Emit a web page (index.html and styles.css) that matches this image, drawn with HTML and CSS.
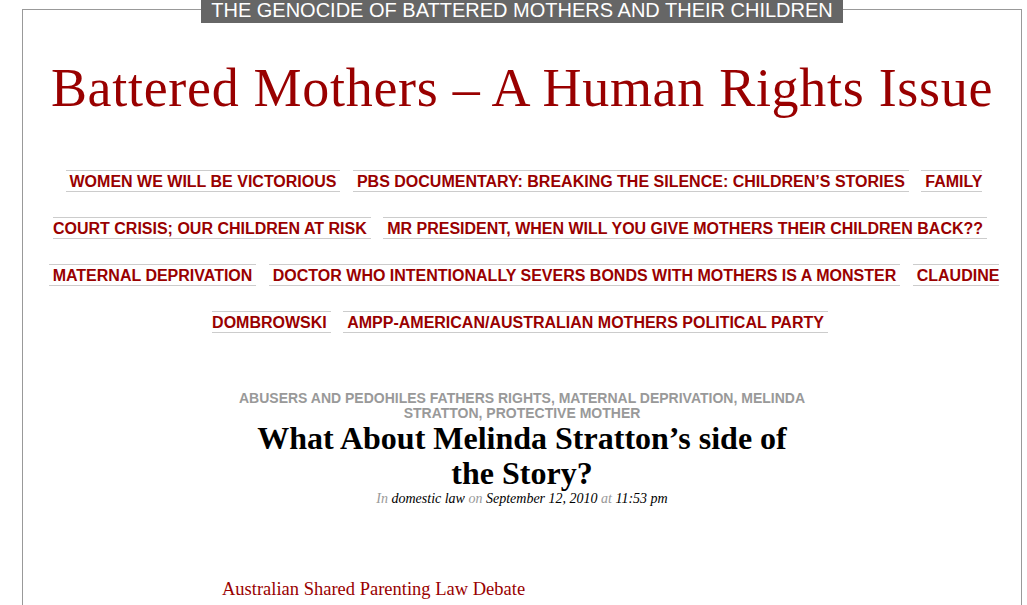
FILE: index.html
```html
<!DOCTYPE html>
<html>
<head>
	<meta charset="UTF-8">
	<title>Battered Mothers – A Human Rights Issue</title>
	<link rel="stylesheet" href="styles.css">
</head>

<body>
	<div id="wrap">
		<div class="tagline">THE GENOCIDE OF BATTERED MOTHERS AND THEIR CHILDREN</div>

		<h1 class="site_title"><a href="#">Battered Mothers – A Human Rights Issue</a></h1>

		<div class="menu">
			<a href="#">WOMEN WE WILL BE VICTORIOUS</a>
			<a href="#">PBS DOCUMENTARY: BREAKING THE SILENCE: CHILDREN’S STORIES</a>
			<a href="#">FAMILY COURT CRISIS; OUR CHILDREN AT RISK</a>
			<a href="#">MR PRESIDENT, WHEN WILL YOU GIVE MOTHERS THEIR CHILDREN BACK??</a>
			<a href="#">MATERNAL DEPRIVATION</a>
			<a href="#">DOCTOR WHO INTENTIONALLY SEVERS BONDS WITH MOTHERS IS A MONSTER</a>
			<a href="#">CLAUDINE DOMBROWSKI</a>
			<a href="#">AMPP-AMERICAN/AUSTRALIAN MOTHERS POLITICAL PARTY</a>
		</div>

		<div class="post">
			<div class="categories">
				<a href="#">ABUSERS AND PEDOHILES FATHERS RIGHTS</a>, <a href="#">MATERNAL DEPRIVATION</a>, <a href="#">MELINDA STRATTON</a>, <a href="#">PROTECTIVE MOTHER</a>
			</div>
			<h2 class="post_title">What About Melinda Stratton’s side of the Story?</h2>
			<div class="meta">
				In <a href="#">domestic law</a> on <span class="date">September 12, 2010</span> at <span class="date">11:53 pm</span>
			</div>

			<div class="entry">
				<p><a href="#">Australian Shared Parenting Law Debate</a></p>
			</div>
		</div>
	</div>
</body>

</html>
```

FILE: styles.css
```css
body {
	margin: 0;
	padding: 0;
	background: #fff;
	font-family: "Liberation Sans", Arial, sans-serif;
}

a {
	text-decoration: none;
}

#wrap {
	box-sizing: border-box;
	width: 1000px;
	min-height: 700px;
	margin: 9px 0 0 22px;
	border: 1px solid #999;
}

.tagline {
	width: fit-content;
	margin: -10px auto 0;
	padding: 0 10px;
	height: 23px;
	line-height: 20px;
	background: #666;
	color: #fff;
	font-size: 20px;
}

.site_title {
	margin: 35px 0 0;
	text-align: center;
	font-family: "Liberation Serif", "Times New Roman", serif;
	font-weight: normal;
	font-size: 54px;
	line-height: 60px;
	letter-spacing: 0.7px;
}

.site_title a {
	color: #990000;
}

.menu {
	width: 960px;
	margin: 40px auto 0;
	text-align: center;
	font-size: 16px;
	font-weight: bold;
	line-height: 47px;
}

.menu a {
	color: #990000;
	margin: 0 4px;
	padding: 2px 4px 1px;
	border-top: 1px solid #ccc;
	border-bottom: 1px solid #ccc;
}

.post {
	width: 600px;
	margin: 45px auto 0;
}

.categories {
	text-align: center;
	font-size: 14px;
	font-weight: bold;
	line-height: 15px;
}

.categories,
.categories a {
	color: #999;
}

.post_title {
	margin: 0 20px;
	text-align: center;
	font-family: "Liberation Serif", "Times New Roman", serif;
	font-size: 32px;
	line-height: 35px;
	color: #000;
}

.meta {
	text-align: center;
	font-family: "Liberation Serif", "Times New Roman", serif;
	font-style: italic;
	font-size: 14px;
	line-height: 16px;
	color: #999;
}

.meta a,
.meta .date {
	color: #000;
}

.entry {
	margin-top: 72px;
	font-family: "Liberation Serif", "Times New Roman", serif;
	font-size: 18.5px;
}

.entry a {
	color: #990000;
}
```
